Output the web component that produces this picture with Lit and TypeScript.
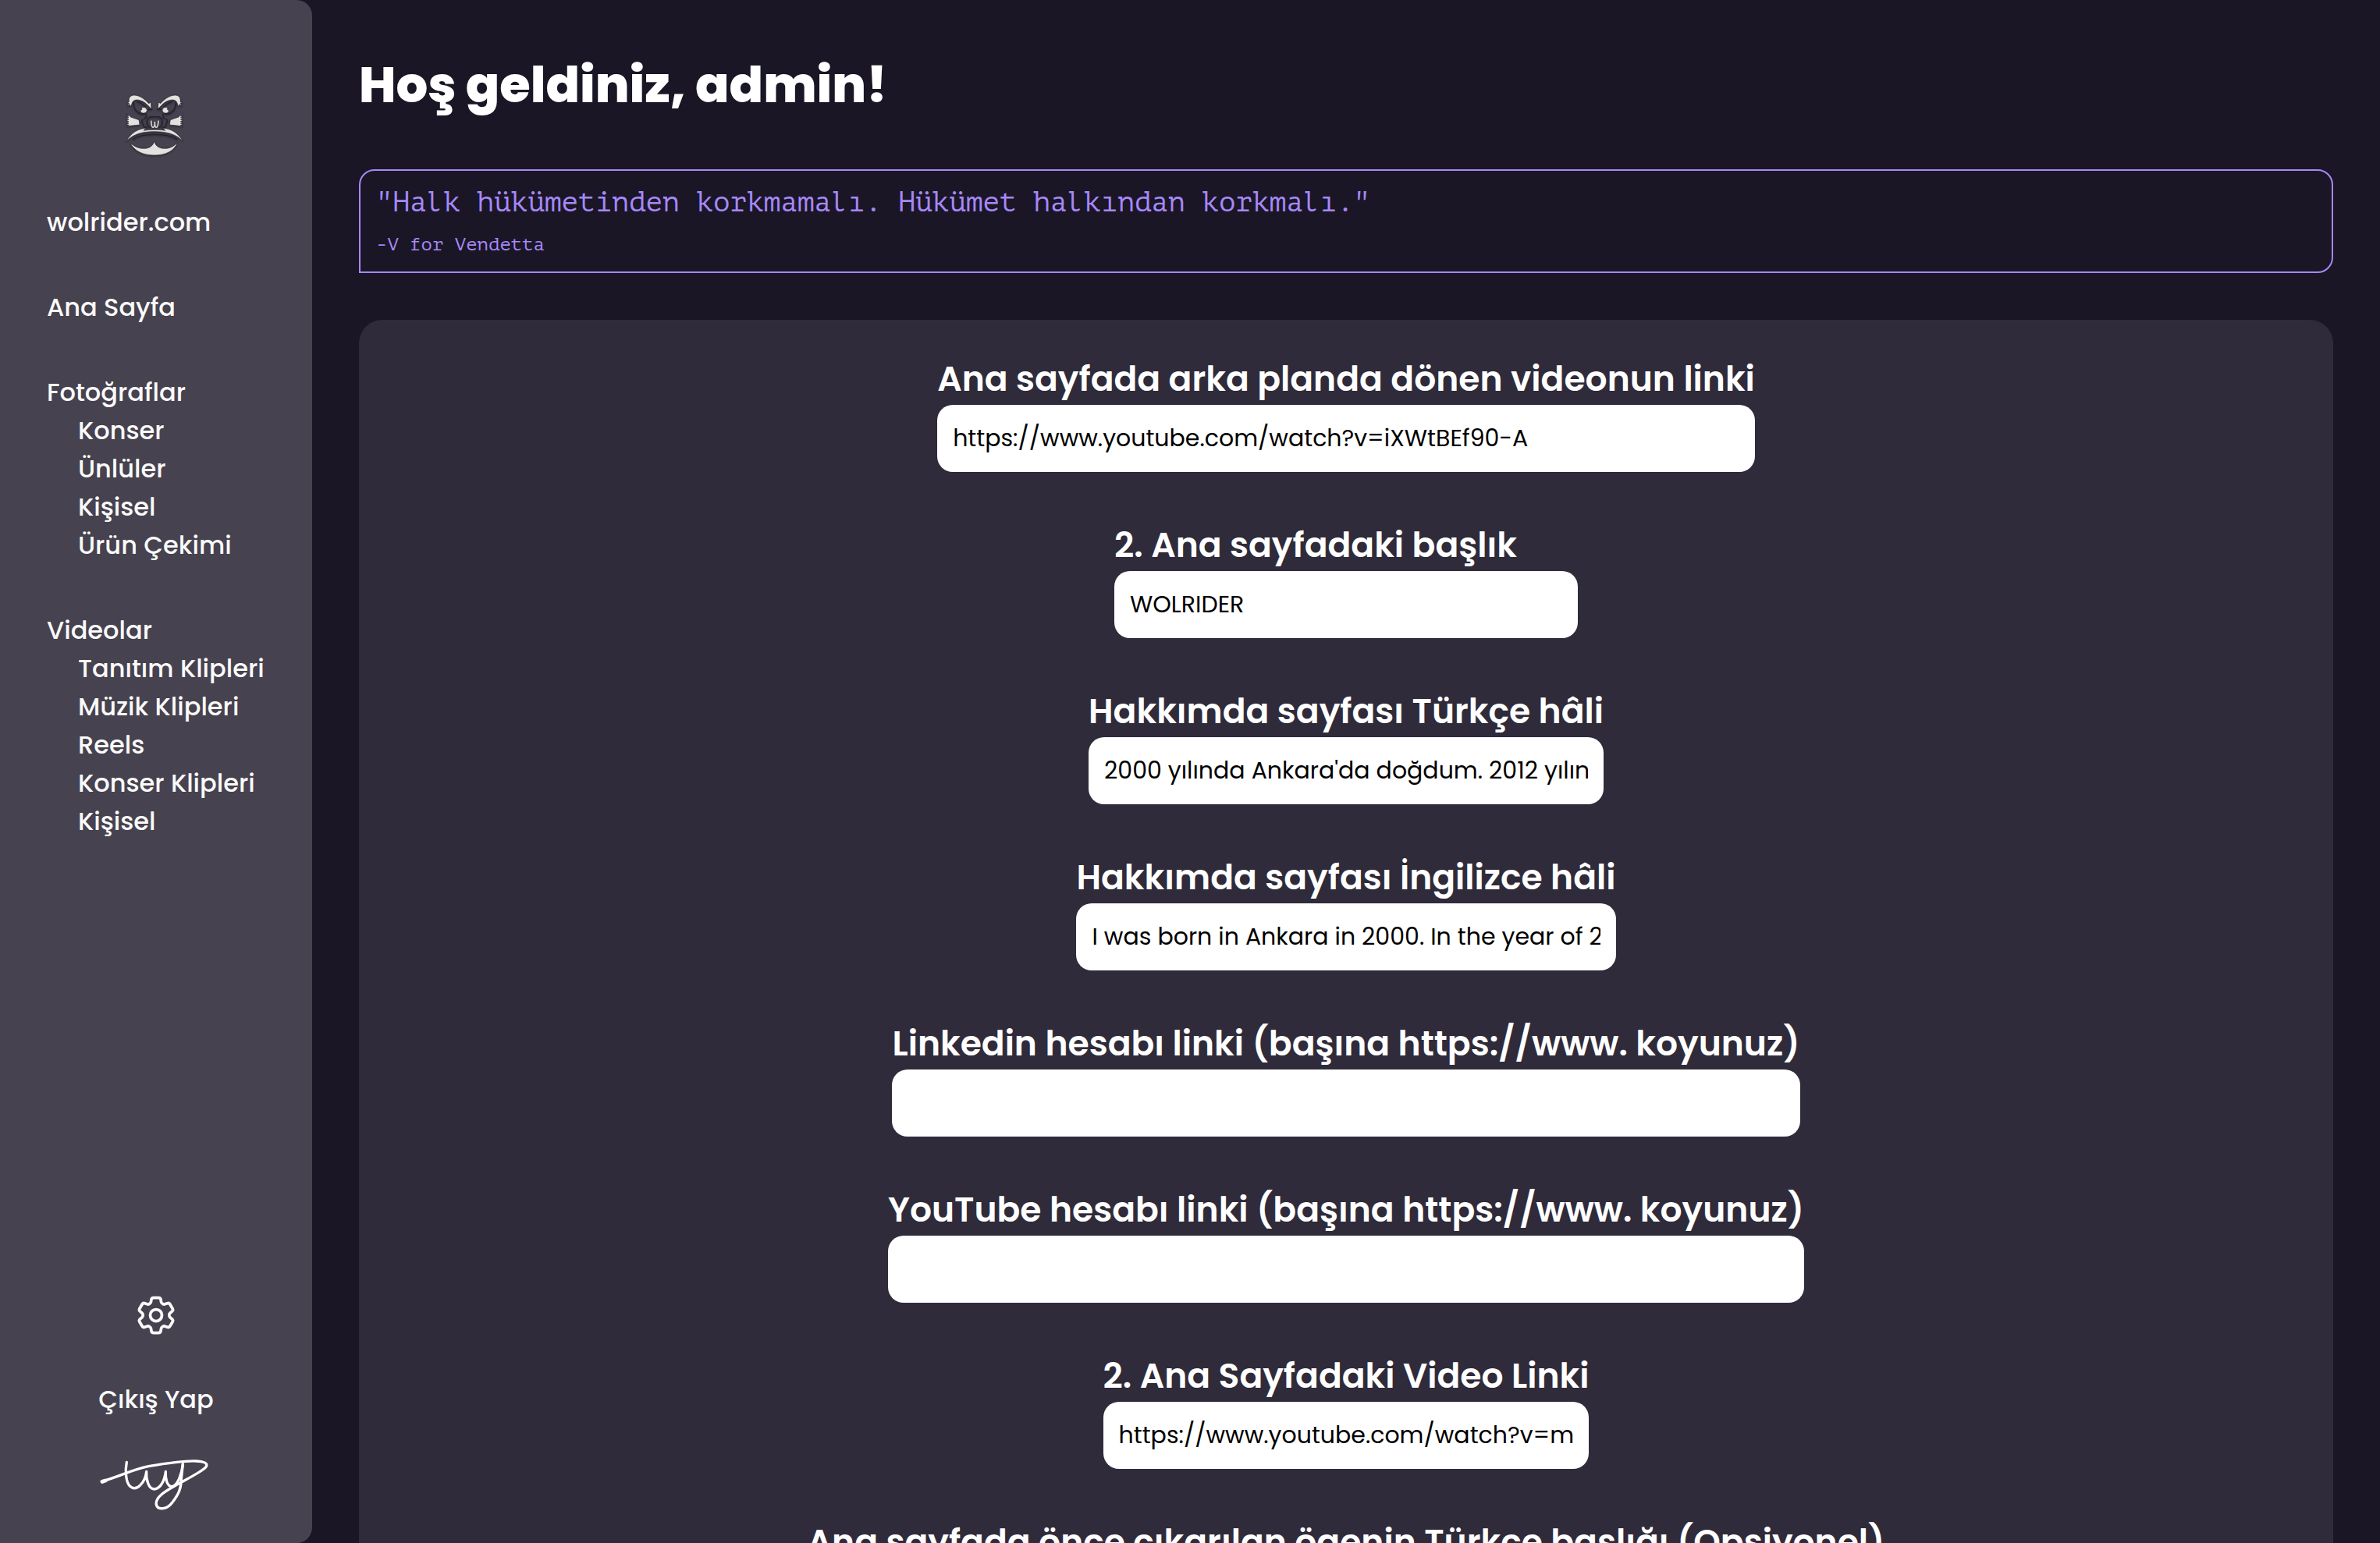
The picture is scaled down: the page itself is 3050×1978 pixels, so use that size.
import { LitElement, html, svg, css } from "lit";
import { customElement } from "lit/decorators.js";

interface NavGroup {
  title: string;
  items: string[];
}

interface Field {
  id: string;
  label: string;
  value: string;
}

const NAV: NavGroup[] = [
  { title: "wolrider.com", items: [] },
  { title: "Ana Sayfa", items: [] },
  { title: "Fotoğraflar", items: ["Konser", "Ünlüler", "Kişisel", "Ürün Çekimi"] },
  { title: "Videolar", items: ["Tanıtım Klipleri", "Müzik Klipleri", "Reels", "Konser Klipleri", "Kişisel"] },
];

const FIELDS: Field[] = [
  { id: "background-video", label: "Ana sayfada arka planda dönen videonun linki", value: "https://www.youtube.com/watch?v=iXWtBEf90-A" },
  { id: "second-title", label: "2. Ana sayfadaki başlık", value: "WOLRIDER" },
  { id: "about-tr", label: "Hakkımda sayfası Türkçe hâli", value: "2000 yılında Ankara'da doğdum. 2012 yılın" },
  { id: "about-en", label: "Hakkımda sayfası İngilizce hâli", value: "I was born in Ankara in 2000. In the year of 2" },
  { id: "linkedin", label: "Linkedin hesabı linki (başına https://www. koyunuz)", value: "" },
  { id: "youtube", label: "YouTube hesabı linki (başına https://www. koyunuz)", value: "" },
  { id: "second-video", label: "2. Ana Sayfadaki Video Linki", value: "https://www.youtube.com/watch?v=m" },
  { id: "featured-title-tr", label: "Ana sayfada önce çıkarılan ögenin Türkçe başlığı (Opsiyonel)", value: "" },
];

// One half of the face; the other half is its mirror image.
const faceHalf = svg`
  <path class="bone" d="M76 92 C73 76 82 66 97 66 C122 68 138 84 152 98 L160 93 L162 119 L152 109 C138 92 120 84 106 84 C94 84 88 92 87 99 L82 111 L79 101 L69 108 L76 97 L67 95 Z"/>
  <path class="line" d="M95 94 C92 112 100 128 116 136 C124 140 132 139 138 136 M148 120 L166 121 M142 138 C144 146 142 152 134 158"/>
  <path class="line" d="M106 92 C120 94 130 100 140 112"/>
  <path class="bone" d="M124 115 C132 110 144 114 145 124 C144 134 134 137 126 134 C118 130 119 122 126 121 Z"/>
  <path class="bone" d="M68 137 L78 145 L82 150 L114 161 L117 180 L80 184 L68 187 L76 181 L66 179 L75 174 L66 171 L75 167 L66 163 L75 159 L66 155 L75 151 L66 147 L75 146 Z"/>
  <path class="line" d="M130 158 C124 162 125 170 129 174 L134 188 L145 192 M146 158 L156 150 L175 149 M146 160 L145 172 L150 186 L158 190"/>
`;

const faceLogo = html`
  <svg class="logo" viewBox="60 60 240 240" role="img" aria-label="wolrider">
    <g>${faceHalf}</g>
    <g transform="matrix(-1 0 0 1 349 0)">${faceHalf}</g>
    <path class="letter" d="M161 164 C162 182 164 190 168 190 C173 190 175 180 175 168 C175 180 177 190 181 190 C186 190 188 182 189 164"/>
    <path class="bone" d="M66 243 C82 212 112 194 142 193 L132 202 C154 198 194 198 216 202 L206 193 C236 194 266 212 283 243 C262 221 232 206 174 206 C116 206 90 220 66 243 Z"/>
    <path class="line" d="M90 238 C118 210 228 210 262 238"/>
    <path class="bone" d="M80 248 C98 266 118 272 134 271 C154 271 168 262 173 243 C178 262 192 271 212 271 C230 272 248 264 262 248 C250 282 214 297 174 297 C132 297 96 282 80 248 Z"/>
  </svg>
`;

const gearIcon = html`
  <svg class="gear" viewBox="0 0 24 24" aria-hidden="true">
    <path d="M9.594 3.94c.09-.542.56-.94 1.11-.94h2.593c.55 0 1.02.398 1.11.94l.213 1.281c.063.374.313.686.645.87.074.04.147.083.22.127.325.196.72.257 1.075.124l1.217-.456a1.125 1.125 0 0 1 1.37.49l1.296 2.247a1.125 1.125 0 0 1-.26 1.431l-1.003.827c-.293.241-.438.613-.43.992a7.723 7.723 0 0 1 0 .255c-.008.378.137.75.43.991l1.004.827c.424.35.534.955.26 1.43l-1.298 2.247a1.125 1.125 0 0 1-1.369.491l-1.217-.456c-.355-.133-.75-.072-1.076.124a6.47 6.47 0 0 1-.22.128c-.331.183-.581.495-.644.869l-.213 1.281c-.09.543-.56.94-1.11.94h-2.594c-.55 0-1.019-.398-1.11-.94l-.213-1.281c-.062-.374-.312-.686-.644-.87a6.52 6.52 0 0 1-.22-.127c-.325-.196-.72-.257-1.076-.124l-1.217.456a1.125 1.125 0 0 1-1.369-.49l-1.297-2.247a1.125 1.125 0 0 1 .26-1.431l1.004-.827c.292-.24.437-.613.43-.991a6.932 6.932 0 0 1 0-.255c.007-.38-.138-.751-.43-.992l-1.004-.827a1.125 1.125 0 0 1-.26-1.43l1.297-2.247a1.125 1.125 0 0 1 1.37-.491l1.216.456c.356.133.751.072 1.076-.124.072-.044.146-.086.22-.128.332-.183.582-.495.644-.869l.214-1.28Z"/>
    <path d="M15 12a3 3 0 1 1-6 0 3 3 0 0 1 6 0Z"/>
  </svg>
`;

const signature = html`
  <svg class="signature" viewBox="9 0 420 198" role="img" aria-label="İmza">
    <path class="thick" d="M12 85 L24 81"/>
    <path d="M12 84 C80 64 130 38 190 26 C260 14 330 4 374 6 C416 8 424 22 400 38 C376 56 340 74 304 94 C262 118 214 142 220 174 C226 196 262 192 282 164 C306 134 316 110 316 74 L322 18"/>
    <path d="M106 10 C100 40 102 86 118 102 C146 128 178 84 182 46 C180 76 190 114 212 114 C238 112 252 78 256 46 C254 76 262 104 280 104 C302 100 318 56 322 18"/>
  </svg>
`;

@customElement("app-root")
export class AppRoot extends LitElement {
  static styles = css`
    :host {
      display: flex;
      height: 100vh;
      overflow: hidden;
      background: #1a1625;
      color: #ffffff;
      font-family: Poppins, "Open Sans", sans-serif;
    }
    * {
      box-sizing: border-box;
    }
    .sidebar {
      display: flex;
      flex: none;
      flex-direction: column;
      justify-content: space-between;
      min-width: 400px;
      padding: 120px 60px 41px;
      border-radius: 0 20px 20px 0;
      background: #46424f;
      color: #fafafa;
      font-size: 32px;
      font-weight: 500;
      line-height: 49px;
    }
    .nav {
      display: flex;
      flex-direction: column;
      gap: 60px;
    }
    .logo {
      align-self: center;
      width: 80px;
      height: 80px;
      overflow: visible;
      filter: drop-shadow(0 1px 1px rgba(20, 18, 26, 0.6));
    }
    .bone {
      fill: #e4e2df;
      stroke: #302d38;
      stroke-width: 2;
      stroke-linejoin: round;
    }
    .line {
      fill: none;
      stroke: #24212b;
      stroke-width: 4;
      stroke-linejoin: round;
    }
    .letter {
      fill: none;
      stroke: #d8d6d6;
      stroke-width: 5;
    }
    .links {
      display: flex;
      flex-direction: column;
      margin: 0;
      padding: 0;
      list-style: none;
    }
    .links .links {
      padding-left: 40px;
    }
    .groups {
      gap: 60px;
    }
    a {
      color: inherit;
      text-decoration: none;
    }
    .footer {
      display: flex;
      flex-direction: column;
      align-items: center;
      gap: 53px;
    }
    .plain {
      display: block;
      padding: 0;
      border: 0;
      background: none;
      color: inherit;
      font: inherit;
      cursor: pointer;
    }
    .gear {
      display: block;
      width: 60px;
      height: 60px;
      fill: none;
      stroke: currentColor;
      stroke-width: 1.5;
      stroke-linecap: round;
      stroke-linejoin: round;
    }
    .signature {
      width: 140px;
      height: 66px;
      overflow: visible;
      fill: none;
      stroke: #ffffff;
      stroke-width: 10;
      stroke-linecap: round;
      stroke-linejoin: round;
    }
    .thick {
      stroke-width: 15;
    }
    .main {
      display: flex;
      flex: 1;
      flex-direction: column;
      gap: 60px;
      min-width: 0;
      padding: 60px;
      overflow-y: auto;
      scrollbar-width: none;
    }
    .title {
      flex: none;
      margin: 0;
      font-size: 64px;
      font-weight: 800;
      line-height: 97px;
    }
    .quote {
      flex: none;
      margin: 0;
      padding: 20px;
      border: 2px solid #a688fa;
      border-radius: 20px 20px 20px 0;
      color: #a688fa;
      font-family: "PT Mono", "Liberation Mono", monospace;
    }
    .quote-text {
      margin: 0 0 20px;
      font-size: 36px;
      line-height: 40px;
    }
    .quote-source {
      font-size: 24px;
      line-height: 29px;
    }
    .card {
      display: flex;
      flex: none;
      flex-direction: column;
      align-items: center;
      gap: 60px;
      padding: 42px 40px;
      border-radius: 30px;
      background: #2f2b3a;
    }
    .field {
      display: flex;
      flex-direction: column;
      min-width: 594px;
    }
    .label {
      font-size: 44px;
      font-weight: 600;
      line-height: 67px;
    }
    .input {
      width: 0;
      min-width: 100%;
      height: 86px;
      padding: 20px;
      border: 0;
      border-radius: 20px;
      background: #ffffff;
      color: #000000;
      font-family: inherit;
      font-size: 30px;
    }
  `;

  private renderGroup(group: NavGroup) {
    return html`
      <li>
        <a href="#">${group.title}</a>
        ${group.items.length
          ? html`<ul class="links">${group.items.map((item) => html`<li><a href="#">${item}</a></li>`)}</ul>`
          : null}
      </li>
    `;
  }

  private renderField(field: Field) {
    return html`
      <div class="field">
        <label class="label" for=${field.id}>${field.label}</label>
        <input class="input" id=${field.id} type="text" .value=${field.value} />
      </div>
    `;
  }

  render() {
    return html`
      <aside class="sidebar">
        <nav class="nav">
          ${faceLogo}
          <ul class="links groups">${NAV.map((group) => this.renderGroup(group))}</ul>
        </nav>
        <div class="footer">
          <button class="plain" type="button" aria-label="Ayarlar">${gearIcon}</button>
          <button class="plain" type="button">Çıkış Yap</button>
          ${signature}
        </div>
      </aside>
      <main class="main">
        <h1 class="title">Hoş geldiniz, admin!</h1>
        <figure class="quote">
          <p class="quote-text">"Halk hükümetinden korkmamalı. Hükümet halkından korkmalı."</p>
          <figcaption class="quote-source">-V for Vendetta</figcaption>
        </figure>
        <form class="card">${FIELDS.map((field) => this.renderField(field))}</form>
      </main>
    `;
  }
}
